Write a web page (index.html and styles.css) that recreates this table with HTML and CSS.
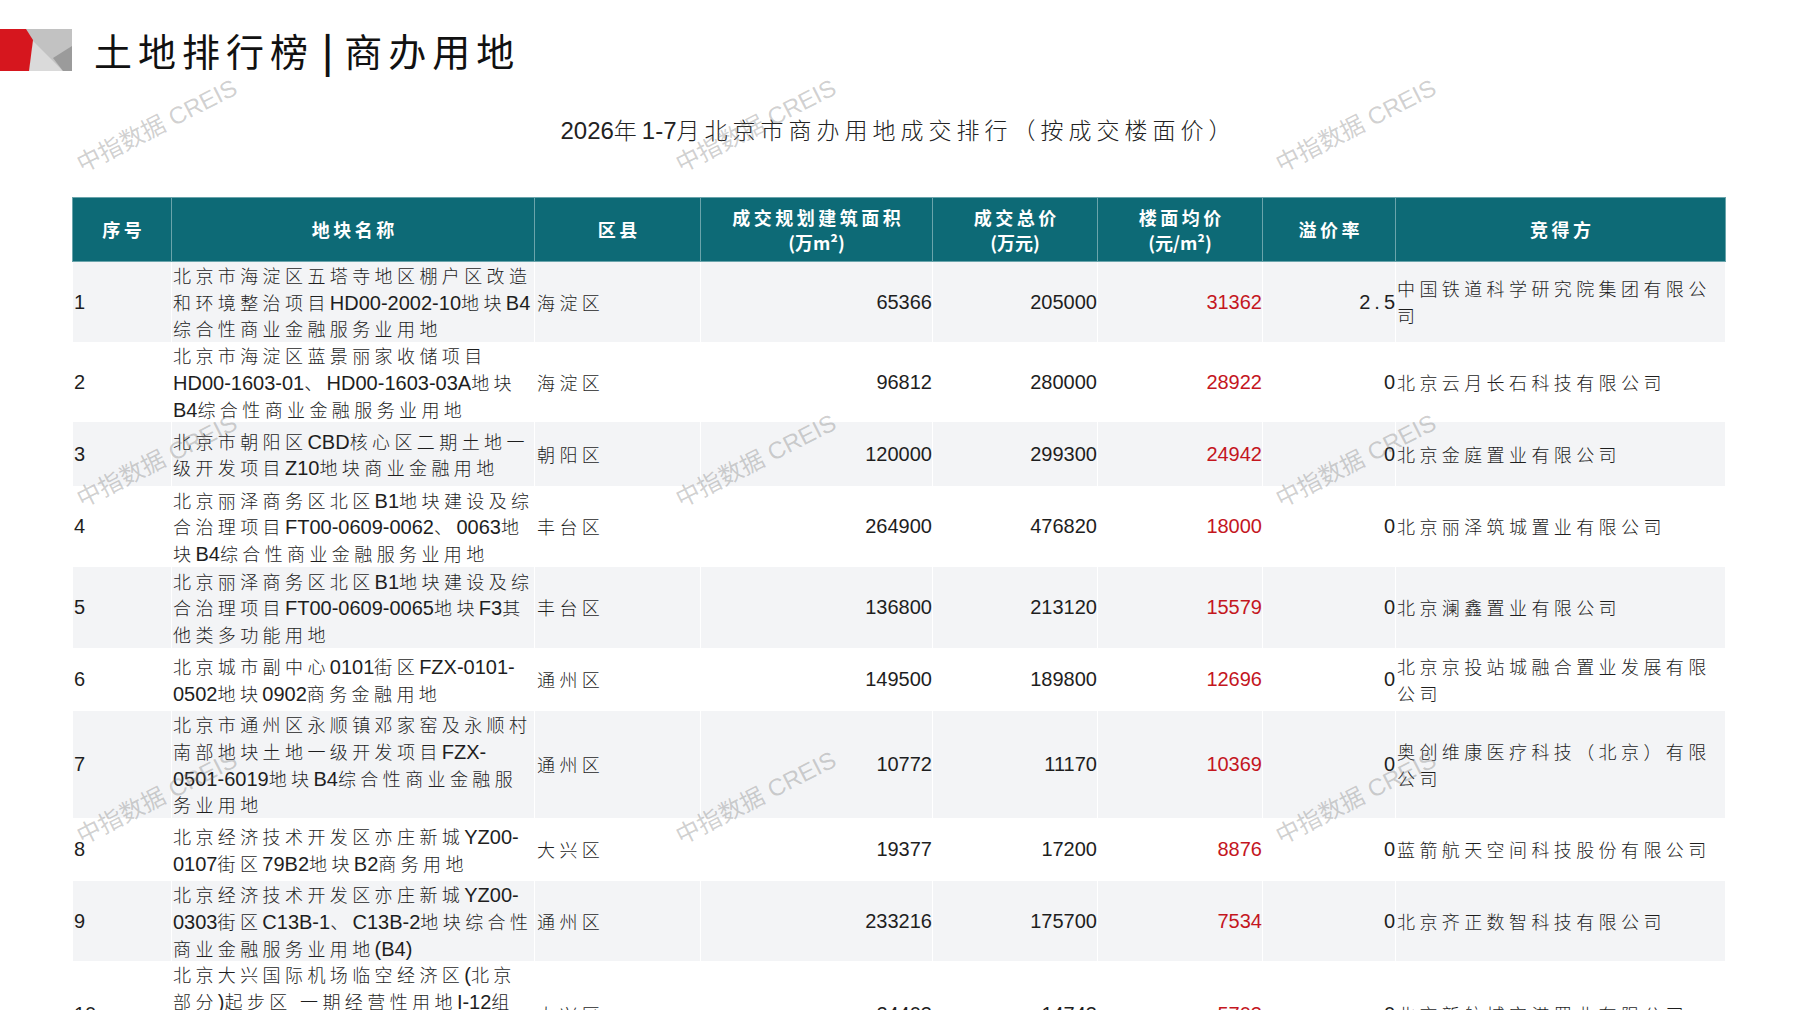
FILE: index.html
```html
<!DOCTYPE html>
<html lang="zh-CN">
<head>
<meta charset="utf-8">
<title>土地排行榜|商办用地</title>
<link rel="stylesheet" href="styles.css">
</head>
<body>
<div class="page">
  <header class="topbar">
    <svg class="logo" viewBox="0 0 72 42" aria-hidden="true">
      <rect x="0" y="0" width="72" height="42" fill="#c2c2c2"/>
      <polygon points="31,10 28,42 63,42" fill="#dadada"/>
      <polygon points="72,17 53,29 63,42 72,42" fill="#9b9b9b"/>
      <polygon points="0,0 26,0 33,11 29,42 0,42" fill="#d6161e"/>
    </svg>
    <h1 class="title">土地排行榜<span class="sep">|</span>商办用地</h1>
  </header>

  <h2 class="subtitle"><span class="l">2026</span>年<span class="l">1-7</span>月北京市商办用地成交排行（按成交楼面价）</h2>

  <table class="rank">
    <colgroup>
      <col class="c-id"><col class="c-name"><col class="c-dist"><col class="c-area">
      <col class="c-total"><col class="c-unit"><col class="c-rate"><col class="c-buyer">
    </colgroup>
    <thead>
      <tr>
        <th>序号</th>
        <th>地块名称</th>
        <th>区县</th>
        <th>成交规划建筑面积<br><span class="u">(万m²)</span></th>
        <th>成交总价<br><span class="u">(万元)</span></th>
        <th>楼面均价<br><span class="u">(元/m²)</span></th>
        <th>溢价率</th>
        <th>竞得方</th>
      </tr>
    </thead>
    <tbody>
      <tr class="r3 odd">
        <td class="id">1</td>
        <td class="name">北京市海淀区五塔寺地区棚户区改造<br>和环境整治项目<span class="l">HD00-2002-10</span>地块<span class="l">B4</span><br>综合性商业金融服务业用地</td>
        <td class="dist">海淀区</td>
        <td class="num">65366</td>
        <td class="num">205000</td>
        <td class="num red">31362</td>
        <td class="rate"><span class="sp">2.</span>5</td>
        <td class="buyer">中国铁道科学研究院集团有限公<br>司</td>
      </tr>
      <tr class="r3">
        <td class="id">2</td>
        <td class="name">北京市海淀区蓝景丽家收储项目<br><span class="l">HD00-1603-01</span>、<span class="l">HD00-1603-03A</span>地块<br><span class="l">B4</span>综合性商业金融服务业用地</td>
        <td class="dist">海淀区</td>
        <td class="num">96812</td>
        <td class="num">280000</td>
        <td class="num red">28922</td>
        <td class="rate">0</td>
        <td class="buyer">北京云月长石科技有限公司</td>
      </tr>
      <tr class="r2b odd">
        <td class="id">3</td>
        <td class="name">北京市朝阳区<span class="l">CBD</span>核心区二期土地一<br>级开发项目<span class="l">Z10</span>地块商业金融用地</td>
        <td class="dist">朝阳区</td>
        <td class="num">120000</td>
        <td class="num">299300</td>
        <td class="num red">24942</td>
        <td class="rate">0</td>
        <td class="buyer">北京金庭置业有限公司</td>
      </tr>
      <tr class="r3b">
        <td class="id">4</td>
        <td class="name">北京丽泽商务区北区<span class="l">B1</span>地块建设及综<br>合治理项目<span class="l">FT00-0609-0062</span>、<span class="l">0063</span>地<br>块<span class="l">B4</span>综合性商业金融服务业用地</td>
        <td class="dist">丰台区</td>
        <td class="num">264900</td>
        <td class="num">476820</td>
        <td class="num red">18000</td>
        <td class="rate">0</td>
        <td class="buyer">北京丽泽筑城置业有限公司</td>
      </tr>
      <tr class="r3b odd">
        <td class="id">5</td>
        <td class="name">北京丽泽商务区北区<span class="l">B1</span>地块建设及综<br>合治理项目<span class="l">FT00-0609-0065</span>地块<span class="l">F3</span>其<br>他类多功能用地</td>
        <td class="dist">丰台区</td>
        <td class="num">136800</td>
        <td class="num">213120</td>
        <td class="num red">15579</td>
        <td class="rate">0</td>
        <td class="buyer">北京澜鑫置业有限公司</td>
      </tr>
      <tr class="r2">
        <td class="id">6</td>
        <td class="name">北京城市副中心<span class="l">0101</span>街区<span class="l">FZX-0101-</span><br><span class="l">0502</span>地块<span class="l">0902</span>商务金融用地</td>
        <td class="dist">通州区</td>
        <td class="num">149500</td>
        <td class="num">189800</td>
        <td class="num red">12696</td>
        <td class="rate">0</td>
        <td class="buyer">北京京投站城融合置业发展有限<br>公司</td>
      </tr>
      <tr class="r4 odd">
        <td class="id">7</td>
        <td class="name">北京市通州区永顺镇邓家窑及永顺村<br>南部地块土地一级开发项目<span class="l">FZX-</span><br><span class="l">0501-6019</span>地块<span class="l">B4</span>综合性商业金融服<br>务业用地</td>
        <td class="dist">通州区</td>
        <td class="num">10772</td>
        <td class="num">11170</td>
        <td class="num red">10369</td>
        <td class="rate">0</td>
        <td class="buyer">奥创维康医疗科技（北京）有限<br>公司</td>
      </tr>
      <tr class="r2">
        <td class="id">8</td>
        <td class="name">北京经济技术开发区亦庄新城<span class="l">YZ00-</span><br><span class="l">0107</span>街区<span class="l">79B2</span>地块<span class="l">B2</span>商务用地</td>
        <td class="dist">大兴区</td>
        <td class="num">19377</td>
        <td class="num">17200</td>
        <td class="num red">8876</td>
        <td class="rate">0</td>
        <td class="buyer">蓝箭航天空间科技股份有限公司</td>
      </tr>
      <tr class="r3 odd">
        <td class="id">9</td>
        <td class="name">北京经济技术开发区亦庄新城<span class="l">YZ00-</span><br><span class="l">0303</span>街区<span class="l">C13B-1</span>、<span class="l">C13B-2</span>地块综合性<br>商业金融服务业用地<span class="l">(B4)</span></td>
        <td class="dist">通州区</td>
        <td class="num">233216</td>
        <td class="num">175700</td>
        <td class="num red">7534</td>
        <td class="rate">0</td>
        <td class="buyer">北京齐正数智科技有限公司</td>
      </tr>
      <tr class="r4">
        <td class="id">10</td>
        <td class="name">北京大兴国际机场临空经济区<span class="l">(</span>北京<br>部分<span class="l">)</span>起步区 一期经营性用地<span class="l">I-12</span>组<br>团<span class="l">C2</span>商业金融用地及<span class="l">F3</span>其他<br>类多功能用地</td>
        <td class="dist">大兴区</td>
        <td class="num">24403</td>
        <td class="num">14743</td>
        <td class="num red">5703</td>
        <td class="rate">0</td>
        <td class="buyer">北京新航城空港置业有限公司</td>
      </tr>
    </tbody>
  </table>

  <div class="wm col1 row1">中指数据 CREIS</div>
  <div class="wm col2 row1">中指数据 CREIS</div>
  <div class="wm col3 row1">中指数据 CREIS</div>
  <div class="wm col1 row2">中指数据 CREIS</div>
  <div class="wm col2 row2">中指数据 CREIS</div>
  <div class="wm col3 row2">中指数据 CREIS</div>
  <div class="wm col1 row3">中指数据 CREIS</div>
  <div class="wm col2 row3">中指数据 CREIS</div>
  <div class="wm col3 row3">中指数据 CREIS</div>
</div>
</body>
</html>
```

FILE: styles.css
```css
html, body {
  margin: 0;
  padding: 0;
  background: #ffffff;
  height: 1010px;
  overflow: hidden;
}

.page {
  position: relative;
  width: 1797px;
  height: 1010px;
  overflow: hidden;
  font-family: "Noto Sans CJK SC", "Noto Sans", sans-serif;
  color: #1e1e1e;
}

/* ---------- top bar ---------- */
.topbar {
  display: flex;
  align-items: center;
  gap: 22px;
  margin-top: 29px;
  height: 42px;
}

.logo {
  width: 72px;
  height: 42px;
  flex: none;
  display: block;
}

.title {
  margin: 0;
  font-size: 38px;
  line-height: 42px;
  font-weight: 400;
  letter-spacing: 6px;
  color: #111111;
  white-space: nowrap;
}

.sep {
  display: inline-block;
  margin: 0 5px 0 8px;
  font-weight: 700;
}

/* ---------- subtitle ---------- */
.subtitle {
  margin: 43px 0 0;
  height: 30px;
  font-size: 23px;
  line-height: 30px;
  font-weight: 300;
  letter-spacing: 5px;
  text-align: center;
  color: #222222;
  white-space: nowrap;
}

.subtitle .l {
  font-family: "Liberation Sans", Arial, sans-serif;
  font-size: 24px;
  line-height: 1;
  letter-spacing: 0;
}

/* ---------- table ---------- */
.rank {
  margin: 53px 0 0 72px;
  width: 1653px;
  table-layout: fixed;
  border-collapse: collapse;
  border-spacing: 0;
}

.c-id { width: 99px; }
.c-name { width: 363px; }
.c-dist { width: 166px; }
.c-area { width: 232px; }
.c-total { width: 165px; }
.c-unit { width: 165px; }
.c-rate { width: 133px; }
.c-buyer { width: 330px; }

.rank thead tr {
  height: 64px;
}

.rank th {
  background: #0d6a76;
  color: #ffffff;
  font-size: 18px;
  line-height: 25px;
  font-weight: 700;
  letter-spacing: 3.5px;
  padding: 0 0 0 3.5px;
  text-align: center;
  vertical-align: middle;
  border: 1px solid #6aa4ab;
  white-space: nowrap;
}

.rank th .u {
  letter-spacing: 0;
  margin-right: 3.5px;
}

.rank td {
  padding: 0;
  vertical-align: middle;
  font-size: 18px;
  line-height: 26.7px;
  font-weight: 300;
  letter-spacing: 4.4px;
  border-left: 1px solid #ffffff;
  border-right: 1px solid #ffffff;
  white-space: nowrap;
  overflow: hidden;
}

.rank tbody tr.odd td {
  background: #f3f4f6;
}

.rank tr.r2 { height: 63px; }
.rank tr.r2b { height: 64px; }
.rank tr.r3 { height: 80px; }
.rank tr.r3b { height: 81px; }
.rank tr.r4 { height: 107px; }

.rank td .l {
  font-family: "Liberation Sans", Arial, sans-serif;
  font-size: 20px;
  line-height: 1;
  font-weight: 400;
  letter-spacing: 0;
}

.rank td.id {
  padding-left: 1px;
  font-family: "Liberation Sans", Arial, sans-serif;
  font-size: 20px;
  font-weight: 400;
  letter-spacing: 0;
}

.rank td.name {
  padding-left: 1px;
}

.rank td.dist {
  padding-left: 2px;
}

.rank td.num {
  text-align: right;
  padding-right: 0;
  font-family: "Liberation Sans", Arial, sans-serif;
  font-size: 20px;
  font-weight: 400;
  letter-spacing: 0;
}

.rank td.red {
  color: #c4161e;
}

.rank td.rate {
  text-align: right;
  padding-right: 0;
  font-family: "Liberation Sans", Arial, sans-serif;
  font-size: 20px;
  font-weight: 400;
  letter-spacing: 0;
  overflow: visible;
}

.rank td.rate .sp {
  letter-spacing: 4px;
}

.rank td.buyer {
  padding-left: 1px;
}

/* ---------- watermarks ---------- */
.wm {
  position: absolute;
  transform: translate(-50%, -50%) rotate(-27deg);
  font-family: "Liberation Sans", "Noto Sans CJK SC", sans-serif;
  font-size: 24px;
  line-height: 30px;
  color: rgba(110, 110, 110, 0.33);
  white-space: nowrap;
  pointer-events: none;
  z-index: 5;
}

.col1 { left: 157px; }
.col2 { left: 756px; }
.col3 { left: 1356px; }
.row1 { top: 126px; }
.row2 { top: 461px; }
.row3 { top: 798px; }
```
